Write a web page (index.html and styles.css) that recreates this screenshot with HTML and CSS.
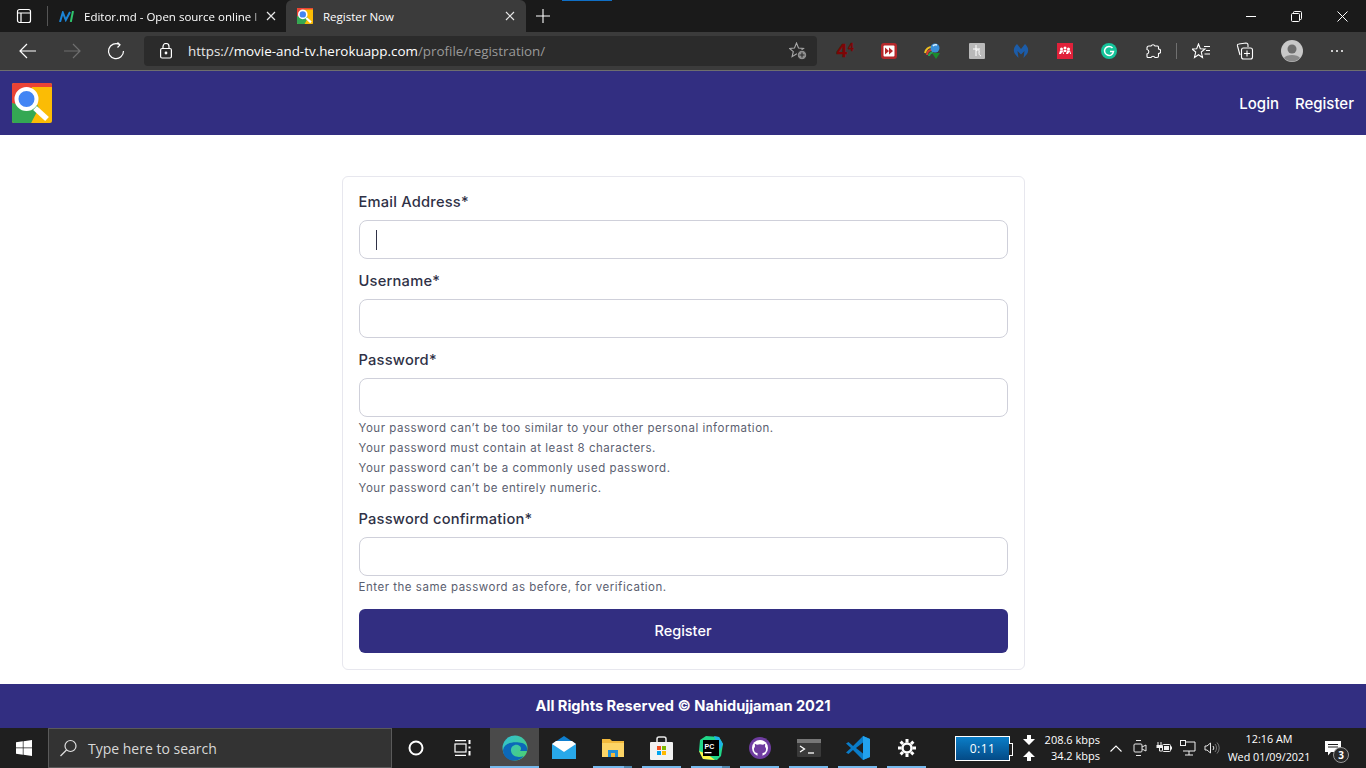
FILE: index.html
```html
<!DOCTYPE html>
<html lang="en">
<head>
<meta charset="utf-8">
<title>Register Now</title>
<link rel="stylesheet" href="styles.css">
</head>
<body>
<svg class="defs" width="0" height="0" aria-hidden="true">
  <symbol id="logo" viewBox="0 0 40 40">
    <rect width="40" height="40" rx="2" fill="#fbbc05"/>
    <path d="M2 0H38A2 2 0 0 1 40 2V4H20L8 26 0 20V2A2 2 0 0 1 2 0Z" fill="#ea4335"/>
    <path d="M0 20L22 25 19 40H2A2 2 0 0 1 0 38Z" fill="#34a853"/>
    <path d="M19 40L27 25 24 20 18 26Z" fill="#34a853"/>
    <path d="M23 25L35 36" stroke="#fff" stroke-width="5.5"/>
    <circle cx="14.500" cy="16" r="10" fill="#4285f4" stroke="#fff" stroke-width="4"/>
  </symbol>
</svg>

<header class="browser">
  <div class="tabbar">
    <div class="tab-left">
      <svg class="ico" width="16" height="16" viewBox="0 0 16 16" fill="none" stroke="#fff" stroke-width="1.2"><rect x="1.5" y="1.5" width="13" height="13" rx="2"/><path d="M1.5 5H14.5M5 5V14.5"/></svg>
    </div>
    <div class="tab-sep"></div>
    <div class="tab">
      <svg class="fav" width="15" height="11" viewBox="0 0 15 11" fill="none" stroke-width="2"><path d="M1 11L3.800 1.500 6.800 9 11 1" stroke="#1b84d6"/><path d="M14 0L11.800 11" stroke="#2fc56d"/></svg>
      <span class="tab-title fade">Editor.md - Open source online l</span>
      <svg class="x" width="10" height="10" viewBox="0 0 10 10" stroke="#e6e6e6" stroke-width="1.2"><path d="M1 1L9 9M9 1L1 9"/></svg>
    </div>
    <div class="tab active">
      <svg class="fav" width="16" height="16"><use href="#logo"/></svg>
      <span class="tab-title">Register Now</span>
      <svg class="x" width="10" height="10" viewBox="0 0 10 10" stroke="#e6e6e6" stroke-width="1.2"><path d="M1 1L9 9M9 1L1 9"/></svg>
    </div>
    <div class="newtab"><svg width="14" height="14" viewBox="0 0 14 14" stroke="#fff" stroke-width="1.1"><path d="M7 0V14M0 7H14"/></svg></div>
    <div class="win">
      <svg width="11" height="11" viewBox="0 0 11 11" stroke="#fff" stroke-width="1"><path d="M1 5.500H11"/></svg>
      <svg width="11" height="11" viewBox="0 0 11 11" stroke="#fff" stroke-width="1" fill="none"><rect x=".5" y="2.500" width="8" height="8" rx="1"/><path d="M2.500 2.500V1.500A1 1 0 0 1 3.500 .5H9.500A1 1 0 0 1 10.500 1.500V7.500A1 1 0 0 1 9.500 8.500H8.500"/></svg>
      <svg width="11" height="11" viewBox="0 0 11 11" stroke="#fff" stroke-width="1"><path d="M.5 .5L10.500 10.500M10.500 .5L.5 10.500"/></svg>
    </div>
    <span class="loadbar"></span>
  </div>
  <div class="toolbar">
    <div class="tbtn"><svg width="18" height="16" viewBox="0 0 18 16" fill="none" stroke="#fff" stroke-width="1.2"><path d="M17 8H1M8 1L1 8 8 15"/></svg></div>
    <div class="tbtn"><svg width="18" height="16" viewBox="0 0 18 16" fill="none" stroke="#6f6f6f" stroke-width="1.2"><path d="M1 8H17M10 1L17 8 10 15"/></svg></div>
    <div class="tbtn"><svg width="18" height="18" viewBox="0 0 18 18" fill="none" stroke="#fff" stroke-width="1.2"><path d="M12.500 2.500A7.500 7.500 0 1 0 16.500 9M10.500 .5L13 2.800 10.500 5.500"/></svg></div>
    <div class="address">
      <svg class="lock" width="12" height="16" viewBox="0 0 12 16" fill="none" stroke="#fff" stroke-width="1.2"><rect x=".6" y="5.500" width="10.800" height="9.500" rx="1.500"/><path d="M3 5.500V3.500A3 3 0 0 1 9 3.500V5.500"/><circle cx="6" cy="10" r=".8" fill="#fff"/></svg>
      <span class="url"><span class="url-scheme">https://</span><b>movie-and-tv.herokuapp.com</b><span class="url-path">/profile/registration/</span></span>
      <svg class="star" width="18" height="18" viewBox="0 0 18 18" fill="none" stroke="#a8a8a8" stroke-width="1.1"><path d="M7.500 1L9.500 6 14.500 6.400 10.700 9.700 11.900 14.700 7.500 12 3.100 14.700 4.300 9.700 .5 6.400 5.500 6Z"/><circle cx="13" cy="13" r="4.800" fill="#8f8f8f" stroke="#2b2b2b"/><path d="M13 10.500V15.500M10.500 13H15.500" stroke="#2b2b2b"/></svg>
    </div>
    <div class="exts">
      <span class="ext four"><span>4</span><sup>4</sup></span>
      <div class="ext"><svg width="16" height="16" viewBox="0 0 16 16"><rect width="16" height="16" rx="3" fill="#b5282b"/><rect x="2.500" y="2.500" width="11" height="11" rx="1" fill="#fff"/><path d="M4 4.500L8 8 4 11.500ZM8 4.500L12 8 8 11.500Z" fill="#b5282b"/></svg></div>
      <div class="ext"><svg width="18" height="18" viewBox="0 0 18 18" fill="none"><path d="M1 11C2 7 5 5 8 5" stroke="#f0c020" stroke-width="2"/><path d="M3 13C3 10 5 8 8 8" stroke="#d04030" stroke-width="2"/><path d="M5 14C5 12 6 11 9 10" stroke="#28a050" stroke-width="2"/><circle cx="11" cy="6" r="4.500" fill="#3a8fd8"/><path d="M9 4A3 2 0 0 1 13 3" stroke="#d8f0ff" stroke-width="1.500"/><path d="M8 11H16L12 17Z" fill="#1c8a2c"/></svg></div>
      <div class="ext"><svg width="16" height="16" viewBox="0 0 16 16" fill="none"><rect width="16" height="16" rx="1" fill="#b9b9b9"/><path d="M7 2V13M7 8C9 6 11 7 10 9 10 11 10 12 12 13M4 6H11" stroke="#fff" stroke-width="1"/></svg></div>
      <div class="ext"><svg width="16" height="14" viewBox="0 0 16 14"><path d="M4 0L8 5 12 0C15.500 3 16 7 14 10L10.500 14 11.500 7 8 10.500 4.500 7 5.500 14 2 10C0 7 .5 3 4 0Z" fill="#1c5ca8"/></svg></div>
      <div class="ext"><svg width="16" height="16" viewBox="0 0 16 16"><rect width="16" height="16" fill="#e0213a"/><g fill="#fff"><circle cx="4.500" cy="6" r="1.500"/><circle cx="8" cy="5" r="1.500"/><circle cx="11.500" cy="6" r="1.500"/><path d="M2 11L3 7.500H6L7 11H6L5.500 8.500 4 11ZM9 11L10 7.500H13L14 11H13L12.500 8.500 11 11ZM6.500 7H9.500L9 9H7Z"/></g></svg></div>
      <div class="ext"><svg width="16" height="16" viewBox="0 0 16 16"><circle cx="8" cy="8" r="8" fill="#15c39a"/><path d="M11.500 5A4.500 4.500 0 1 0 12.500 8.500H9" fill="none" stroke="#fff" stroke-width="1.500"/></svg></div>
      <div class="ext"><svg width="16" height="16" viewBox="0 0 16 16" fill="none" stroke="#fff" stroke-width="1.100"><path d="M4 3H6A2.200 2.200 0 0 1 10 3H12.500A1 1 0 0 1 13.500 4V6A2.200 2.200 0 0 1 13.500 10.500V13A1.500 1.500 0 0 1 12 14.500H10A2.200 2.200 0 0 0 6 14.500H3A1 1 0 0 1 2 13.500V11A2.300 2.300 0 0 0 2 6.500V5A2 2 0 0 1 4 3Z"/></svg></div>
      <span class="ext-sep"></span>
      <div class="ext"><svg width="18" height="16" viewBox="0 0 18 16" fill="none" stroke="#fff" stroke-width="1.100"><path d="M6.500 1L8.300 5.800 13 6 9.300 9 10.500 14.500 6.500 11.700 2.500 14.500 3.700 9 0 6 4.700 5.800ZM12 3.500H18M14 7.500H18M12.500 11H18"/></svg></div>
      <div class="ext"><svg width="18" height="18" viewBox="0 0 18 18" fill="none" stroke="#fff" stroke-width="1.100"><path d="M4 13L1.500 4Q1 2 3 2L10 1Q12 1 12 3V5"/><rect x="5.500" y="6" width="11" height="11" rx="2"/><path d="M11 8.500V14.500M8 11.500H14"/></svg></div>
      <div class="ext avatar"><svg width="22" height="22" viewBox="0 0 22 22"><circle cx="11" cy="11" r="11" fill="#c8c8c8"/><circle cx="11" cy="9" r="4.500" fill="#6e6e6e"/><path d="M3 18C5 14 17 14 19 18A11 11 0 0 1 3 18Z" fill="#8a8a8a"/></svg></div>
      <div class="ext dots"><i></i><i></i><i></i></div>
    </div>
  </div>
</header>

<nav class="navbar">
  <svg class="brand" width="40" height="40"><use href="#logo"/></svg>
  <div class="navlinks"><a>Login</a><a>Register</a></div>
</nav>

<main class="page">
  <form class="card">
    <label class="label">Email Address*</label>
    <div class="field"><input class="input" type="text"><span class="caret"></span></div>
    <label class="label">Username*</label>
    <input class="input" type="text">
    <label class="label">Password*</label>
    <input class="input" type="password">
    <p class="help">Your password can’t be too similar to your other personal information.</p>
    <p class="help">Your password must contain at least 8 characters.</p>
    <p class="help">Your password can’t be a commonly used password.</p>
    <p class="help">Your password can’t be entirely numeric.</p>
    <label class="label">Password confirmation*</label>
    <input class="input" type="password">
    <p class="help">Enter the same password as before, for verification.</p>
    <button class="submit" type="button">Register</button>
  </form>
</main>

<footer class="footer">All Rights Reserved © Nahidujjaman 2021</footer>

<div class="taskbar">
  <div class="start"><svg width="16" height="16" viewBox="0 0 16 16" fill="#fff"><path d="M0 2.300L6.800 1.300V7.500H0ZM7.500 1.200L16 0V7.500H7.500ZM0 8.200H6.800V14.700L0 13.700ZM7.500 8.200H16V16L7.500 14.800Z"/></svg></div>
  <div class="search">
    <svg width="17" height="18" viewBox="0 0 17 18" fill="none" stroke="#e0e0e0" stroke-width="1.200"><circle cx="10.500" cy="7" r="5.500"/><path d="M6.500 11L.5 17"/></svg>
    <span>Type here to search</span>
  </div>
  <div class="tk-btn"><svg width="16" height="16" viewBox="0 0 16 16" fill="none" stroke="#fff" stroke-width="2"><circle cx="8" cy="8" r="6.500"/></svg></div>
  <div class="tk-btn"><svg width="17" height="16" viewBox="0 0 17 16" fill="none" stroke="#fff" stroke-width="1.200"><path d="M1 .6H12M1 15.400H12"/><rect x="1" y="4" width="11" height="8"/><path d="M15.500 0V4M15.500 6.500V8.500M15.500 11V15.500" stroke-width="2"/></svg></div>
  <div class="apps">
    <div class="app on first"><svg width="26" height="26" viewBox="0 0 26 26"><defs><linearGradient id="eg" x1="0" y1="0" x2="1" y2="1"><stop offset="0" stop-color="#2fc0d8"/><stop offset="1" stop-color="#50d068"/></linearGradient></defs><circle cx="13" cy="13" r="12.500" fill="url(#eg)"/><path d="M1 15C1 22 7 26 13 25.500 17 25 20 23.500 21.500 21 17 23 10 22 9 16 8.500 12 12 9 16 10 19 11 20 14 18 16H25C26 10 22 8 17 7.500 9 6.500 2 9 1 15Z" fill="#0c68b8"/></svg></div>
    <div class="app"><svg width="24" height="24" viewBox="0 0 24 24"><path d="M0 8L12 0 24 8V23H0Z" fill="#0f7fd0"/><path d="M0 8L12 16 24 8V23H0Z" fill="#28a8ea"/><path d="M0 8L12 16 24 8 20 5 4 5Z" fill="#fff"/></svg></div>
    <div class="app wide"><svg width="22" height="18" viewBox="0 0 22 18"><path d="M0 0H8L10 2H22V18H0Z" fill="#f2b93c"/><path d="M0 4H22V18H0Z" fill="#fcd466"/><rect x="6" y="11" width="10" height="7" fill="#1f8fd8"/><rect x="9" y="14" width="4" height="4" fill="#f2b93c"/></svg></div>
    <div class="app"><svg width="23" height="24" viewBox="0 0 23 24"><path d="M7 6V3A2 2 0 0 1 9 1H14A2 2 0 0 1 16 3V6" fill="none" stroke="#e8e8e8" stroke-width="1.500"/><rect y="6" width="23" height="18" rx="1" fill="#f2f2f2"/><rect x="7" y="10" width="4" height="4" fill="#f25022"/><rect x="12" y="10" width="4" height="4" fill="#7fba00"/><rect x="7" y="15" width="4" height="4" fill="#00a4ef"/><rect x="12" y="15" width="4" height="4" fill="#ffb900"/></svg></div>
    <div class="app wide"><svg width="24" height="24" viewBox="0 0 24 24"><path d="M1 4L7 0 20 1 24 8 22 20 18 24 4 23 0 15Z" fill="#21d789"/><path d="M15 0L20 1 24 8 21 14Z" fill="#1eb3e8"/><path d="M0 15L4 23 16 24 8 18Z" fill="#fcf84a"/><rect x="4" y="4" width="16" height="16" fill="#000"/><text x="5.500" y="12.500" class="pc">PC</text><rect x="5.500" y="16" width="7" height="1.300" fill="#fff"/></svg></div>
    <div class="app"><svg width="22" height="22" viewBox="0 0 22 22"><circle cx="11" cy="11" r="11" fill="#6e3ca0"/><circle cx="11" cy="11" r="8" fill="#fff"/><path d="M8.500 19V16C6 16 4.700 14 5 11.500L6 9.500 5.800 6.800 8 7.800A9 9 0 0 1 14 7.800L16.200 6.800 16 9.500 17 11.500C17.300 14 16 16 13.500 16V19Z" fill="#6e3ca0"/></svg></div>
    <div class="app"><svg width="24" height="18" viewBox="0 0 24 18"><rect width="24" height="18" rx="1" fill="#3a3a3a"/><rect width="24" height="4" fill="#777"/><path d="M3 7L7.500 10 3 13" fill="none" stroke="#fff" stroke-width="1.300"/><path d="M11 14H17" stroke="#fff" stroke-width="1.300"/></svg></div>
    <div class="app"><svg width="24" height="24" viewBox="0 0 24 24"><path d="M17 0L24 3V21L17 24 7 14 2.500 18 0 16.500 5 12 0 7.500 2.500 6 7 10Z" fill="#0a7cc8"/><path d="M17 6.500L10 12 17 17.500Z" fill="#1f1f1f"/><path d="M17 0L24 3V21L17 24Z" fill="#22a2ee"/></svg></div>
    <div class="app"><svg width="18" height="18" viewBox="0 0 18 18" fill="none" stroke="#fff"><circle cx="9" cy="9" r="4.500" stroke-width="2.500"/><path d="M9 0V3.500M9 14.500V18M0 9H3.500M14.500 9H18M2.600 2.600L5 5M13 13L15.400 15.400M15.400 2.600L13 5M5 13L2.600 15.400" stroke-width="3"/></svg></div>
  </div>
  <div class="tray">
    <div class="battery"><span>0:11</span></div>
    <div class="arrows">
      <svg width="12" height="10" viewBox="0 0 12 10" fill="#fff"><path d="M4 0H8V4H12L6 10 0 4H4Z"/></svg>
      <svg width="12" height="10" viewBox="0 0 12 10" fill="#fff"><path d="M6 0L12 6H8V10H4V6H0Z"/></svg>
    </div>
    <div class="speeds"><span>208.6 kbps</span><span>34.2 kbps</span></div>
    <div class="trayicons">
      <div class="cell"><svg width="12" height="7" viewBox="0 0 12 7" fill="none" stroke="#fff" stroke-width="1.100"><path d="M.5 6.500L6 1 11.500 6.500"/></svg></div>
      <div class="cell"><svg width="14" height="18" viewBox="0 0 14 18" fill="none" stroke="#e8e8e8"><rect x="1" y="5" width="8" height="8" rx="1"/><path d="M9 8L13 6V12L9 10M3 1.500H8M3 16.500H8"/></svg></div>
      <div class="cell"><svg width="16" height="12" viewBox="0 0 16 12" fill="none" stroke="#f0f0f0"><path d="M2 0V3M5 0V3M3.500 6V9H6"/><rect x=".5" y="3" width="5.500" height="3" fill="#f0f0f0" stroke="none"/><rect x="6.500" y="2.500" width="8" height="7" rx="1"/><rect x="8" y="4" width="5" height="4" fill="#f0f0f0" stroke="none"/><path d="M15.500 4.500V7.500"/></svg></div>
      <div class="cell"><svg width="16" height="16" viewBox="0 0 16 16" fill="none" stroke="#f0f0f0" stroke-width="1"><path d="M3 2H15V11H3M9 11V15M5 15H13"/><rect x=".5" y=".5" width="5" height="5" fill="#1f1f1f"/></svg></div>
      <div class="cell"><svg width="16" height="16" viewBox="0 0 16 16" fill="none" stroke="#e8e8e8" stroke-width="1"><path d="M1 6H3L6.500 3V13L3 10H1ZM9 6A3 3 0 0 1 9 10"/><path d="M11 4A6 6 0 0 1 11 12M13 2.500A8 8 0 0 1 13 13.500" stroke="#777"/></svg></div>
    </div>
    <div class="clock"><span>12:16 AM</span><span>Wed 01/09/2021</span></div>
    <div class="notif">
      <svg width="16" height="15" viewBox="0 0 16 15" fill="#fff"><path d="M0 0H16V11H6L3 14.500V11H0Z"/><path d="M3 3.500H13M3 6H13" stroke="#1f1f1f"/></svg>
      <span class="badge">3</span>
    </div>
  </div>
</div>
</body>
</html>
```

FILE: styles.css
```css
* { box-sizing: border-box; }
html, body { margin: 0; height: 100%; }
body {
  width: 1366px; height: 768px; overflow: hidden;
  display: flex; flex-direction: column;
  font-family: Inter, "Liberation Sans", sans-serif;
  background: #fff;
}
.defs { position: absolute; }

/* browser chrome */
.browser { flex: none; height: 71px; font-family: "Open Sans", "Noto Sans", sans-serif; color: #fff; }
.tabbar { height: 32px; background: #1a1a1a; display: flex; align-items: stretch; position: relative; }
.tab-left { width: 47px; display: flex; align-items: center; justify-content: center; }
.tab-sep { width: 1px; height: 20px; background: #555; align-self: center; }
.tab { width: 238px; display: flex; align-items: center; padding: 0 9px 0 11px; font-size: 11.500px; }
.tab .fav { flex: none; }
.tab.active { background: #3b3b3b; width: 240px; border-radius: 6px 6px 0 0; padding-left: 11px; padding-right: 10px; }
.tab-title { flex: 1; margin-left: 10px; white-space: nowrap; overflow: hidden; }
.fade { -webkit-mask-image: linear-gradient(90deg, #000 94%, rgba(0,0,0,.35)); mask-image: linear-gradient(90deg, #000 94%, rgba(0,0,0,.35)); }
.x { flex: none; margin-left: 6px; margin-right: 1px; }
.newtab { width: 34px; display: flex; align-items: center; justify-content: center; }
.win { margin-left: auto; display: flex; align-items: center; gap: 35px; padding-right: 18px; }
.loadbar { position: absolute; left: 562px; top: 0; width: 50px; height: 1px; background: #0f6fc6; }
.toolbar { height: 39px; background: #3b3b3b; border-bottom: 1px solid #6e6e6e; display: flex; align-items: center; padding: 0 0 0 6px; }
.tbtn { width: 44px; height: 30px; display: flex; align-items: center; justify-content: center; }
.address { margin-left: 6px; width: 673px; height: 30px; background: #2b2b2b; border-radius: 4px; display: flex; align-items: center; padding: 0 10px 0 16px; }
.lock { flex: none; }
.url { margin-left: 16px; font-size: 13.400px; flex: 1; white-space: nowrap; }
.url b { font-weight: 400; color: #fff; }
.url-scheme { color: #e8e8e8; }
.url-path { color: #9a9a9a; }
.star { flex: none; }
.exts { flex: 1; display: flex; align-items: center; height: 30px; padding-left: 6px; }
.ext { width: 44px; height: 30px; display: flex; align-items: center; justify-content: center; flex: none; }
.four { font: 700 19px "Liberation Sans", sans-serif; color: #7d0505; -webkit-text-stroke: .3px #7d0505; }
.four sup { align-self: flex-start; margin: 7px 0 0 1px; font-size: 10px; line-height: 10px; }
.ext-sep { width: 1px; height: 16px; background: #707070; flex: none; margin: 0 1px; }
.ext-sep + .ext { margin-left: 1px; }
.avatar { margin-left: 3px; }
.dots { gap: 3px; margin-left: 1px; }
.dots i { width: 2px; height: 2px; background: #fff; border-radius: 50%; }

/* site */
.navbar { flex: none; height: 64px; background: #322e81; display: flex; align-items: center; justify-content: space-between; padding: 0 12px; }
.brand { display: block; }
.navlinks { display: flex; gap: 16px; padding-top: 1px; }
.navlinks a { color: #fff; font-size: 15px; font-weight: 500; line-height: 24px; }
.page { flex: 1; padding-top: 41px; display: flex; justify-content: center; align-items: flex-start; }
.card { width: 683px; height: 494px; border: 1px solid #e7e7ee; border-radius: 6px; padding: 13px 16px 16px; display: flex; flex-direction: column; }
.label { display: block; font-size: 14.700px; font-weight: 500; line-height: 24px; color: #2f3146; margin: 10px 0 6px; letter-spacing: .2px; white-space: nowrap; }
.label:first-child { margin-top: 0; }
.field { position: relative; }
.input { display: block; width: 100%; height: 39px; border: 1px solid #cfd0da; border-radius: 8px; background: #fff; padding: 0 16px; outline: none; flex: none; }
.caret { position: absolute; left: 17px; top: 10px; width: 1px; height: 20px; background: #2f3146; }
.help { margin: 0 0 -1px; padding-top: 1px; height: 21px; font-size: 11.500px; line-height: 20px; color: #5b6070; letter-spacing: .52px; white-space: nowrap; }
.submit { margin-top: 13px; height: 44px; flex: none; width: 100%; border: 0; border-radius: 6px; padding-bottom: 2px; background: #322e81; color: #fff; font: 500 14.500px Inter, sans-serif; }
.footer { flex: none; height: 44px; background: #322e81; color: #fff; font-size: 14.600px; font-weight: 700; display: flex; align-items: center; justify-content: center; }

/* taskbar */
.taskbar { flex: none; height: 40px; background: #1f1f1f; display: flex; align-items: center; font-family: "Open Sans", "Noto Sans", sans-serif; color: #fff; }
.start { width: 48px; display: flex; justify-content: center; }
.search { width: 344px; height: 40px; background: #333; border: 1px solid #5a5a5a; display: flex; align-items: center; gap: 11px; padding-left: 11px; font-size: 14px; color: #d8d8d8; }
.tk-btn { width: 47px; height: 40px; display: flex; align-items: center; justify-content: center; flex: none; }
.apps { display: flex; margin-left: 4px; }
.app { width: 49px; height: 40px; display: flex; align-items: center; justify-content: center; position: relative; }
.app::after { content: ""; position: absolute; left: 5px; right: 5px; bottom: 0; height: 2px; background: #76b9ed; }
.app.wide::after { background: linear-gradient(90deg, #76b9ed 80%, #4f86ad 80%); }
.app.first::after { left: 0; right: 0; }
.app.on { background: #4a4a4a; }
.app:nth-child(2)::after { display: none; }
.tray { margin-left: auto; display: flex; align-items: center; height: 40px; font-size: 11px; margin-right: 11px; }
.battery { width: 55px; height: 25px; border: 1px solid #fff; background: linear-gradient(#0a7ec8, #044a86); color: #fff; display: flex; align-items: center; justify-content: center; font-size: 12px; letter-spacing: .5px; margin-right: 13px; position: relative; }
.battery::after { content: ""; position: absolute; right: -4px; top: 6px; width: 3px; height: 11px; background: #1f1f1f; border: 1px solid #fff; border-left: 0; }
.arrows { display: flex; flex-direction: column; gap: 6px; }
.speeds { display: flex; flex-direction: column; align-items: flex-end; width: 65px; line-height: 16px; }
.trayicons { display: flex; align-items: center; margin-left: 4px; }
.cell { width: 24px; height: 40px; display: flex; align-items: center; justify-content: center; }
.clock { display: flex; flex-direction: column; align-items: center; width: 84px; line-height: 18px; margin-left: 3px; font-size: 10.800px; white-space: nowrap; }
.notif { width: 44px; height: 40px; position: relative; display: flex; align-items: center; justify-content: center; }
.badge { position: absolute; left: 22px; top: 19px; width: 16px; height: 16px; border-radius: 50%; border: 1px solid #999; background: #2a2a2a; font-size: 10px; font-weight: 700; line-height: 14px; text-align: center; }
.pc { font: 700 7px "Liberation Sans", sans-serif; fill: #fff; }
```
